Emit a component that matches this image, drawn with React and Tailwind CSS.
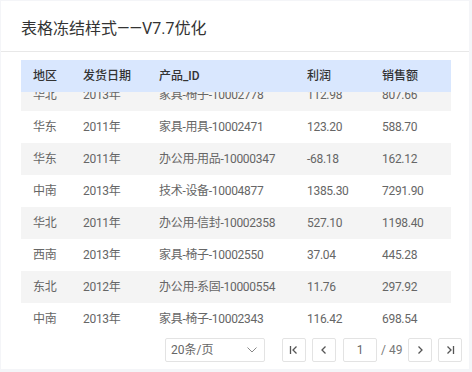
import React from "react";

const rows = [
  ["华北", "2013年", "家具-椅子-10002778", "112.98", "807.66"],
  ["华东", "2011年", "家具-用具-10002471", "123.20", "588.70"],
  ["华东", "2011年", "办公用-用品-10000347", "-68.18", "162.12"],
  ["中南", "2013年", "技术-设备-10004877", "1385.30", "7291.90"],
  ["华北", "2011年", "办公用-信封-10002358", "527.10", "1198.40"],
  ["西南", "2013年", "家具-椅子-10002550", "37.04", "445.28"],
  ["东北", "2012年", "办公用-系固-10000554", "11.76", "297.92"],
  ["中南", "2013年", "家具-椅子-10002343", "116.42", "698.54"],
];

const widths = ["w-[50px]", "w-[76px]", "w-[148px]", "w-[75px]", "w-[81px]"];
const headers = ["地区", "发货日期", "产品_ID", "利润", "销售额"];

function Btn({ children }) {
  return (
    <div className="w-[24px] h-[24px] flex items-center justify-center border border-[#e3e3e3] rounded-[2px] bg-white text-[#555]">
      {children}
    </div>
  );
}

export default function App() {
  return (
    <div className="w-[472px] h-[372px] bg-[#f4f5f8] pl-[1px] pt-[1px]" style={{ fontFamily: "Roboto, 'Noto Sans CJK SC', sans-serif" }}>
      <div className="w-[468px] h-[368px] bg-white flex flex-col">
        <div className="h-[51px] border-b border-[#e8e8e8] flex items-center pl-[20px] pt-[6px] text-[16px] text-[#333]">
          表格冻结样式——V7.7优化
        </div>
        <div className="pl-[20px] pt-[8px]">
          <div className="w-[430px]">
            <div className="flex h-[32px] bg-[#d9e7fe] items-center text-[12px] font-medium text-[#333]">
              {headers.map((h, i) => (
                <div key={i} className={`${widths[i]} pl-[12px]`}>{h}</div>
              ))}
            </div>
            <div className="h-[243px] overflow-hidden">
              <div className="-mt-[13px]">
                {rows.map((r, ri) => (
                  <div key={ri} className={`flex h-[32px] items-center text-[12px] text-[#666] tracking-[-0.3px] ${ri % 2 === 0 ? "bg-[#f4f4f4]" : "bg-white"}`}>
                    {r.map((c, i) => (
                      <div key={i} className={`${widths[i]} pl-[12px] whitespace-nowrap`}>{c}</div>
                    ))}
                  </div>
                ))}
              </div>
            </div>
          </div>
        </div>
        <div className="flex justify-end items-center pr-[7px] pt-[3px] text-[12px] text-[#666]">
          <div className="w-[100px] h-[24px] border border-[#e3e3e3] rounded-[2px] flex items-center justify-between pl-[5px] pr-[7px]">
            <span>20条/页</span>
            <svg width="10" height="6" viewBox="0 0 10 6" fill="none" stroke="#888" strokeWidth="1">
              <path d="M0.5 0.5 L5 5 L9.5 0.5" />
            </svg>
          </div>
          <div className="ml-[17px] flex items-center gap-[6px]">
            <Btn>
              <svg width="10" height="10" viewBox="0 0 10 10" fill="none" stroke="#555" strokeWidth="1.3">
                <path d="M1.5 1 V9" />
                <path d="M7.5 1.5 L4 5 L7.5 8.5" />
              </svg>
            </Btn>
            <Btn>
              <svg width="10" height="10" viewBox="0 0 10 10" fill="none" stroke="#555" strokeWidth="1.3">
                <path d="M6.5 1.5 L3 5 L6.5 8.5" />
              </svg>
            </Btn>
            <div className="ml-[1px] w-[34px] h-[24px] border border-[#e3e3e3] rounded-[2px] flex items-center justify-center text-[#666]">1</div>
            <span className="ml-[-2px] w-[21px] whitespace-nowrap text-[#777]">/ 49</span>
            <Btn>
              <svg width="10" height="10" viewBox="0 0 10 10" fill="none" stroke="#555" strokeWidth="1.3">
                <path d="M3.5 1.5 L7 5 L3.5 8.5" />
              </svg>
            </Btn>
            <Btn>
              <svg width="10" height="10" viewBox="0 0 10 10" fill="none" stroke="#555" strokeWidth="1.3">
                <path d="M2.5 1.5 L6 5 L2.5 8.5" />
                <path d="M8.5 1 V9" />
              </svg>
            </Btn>
          </div>
        </div>
      </div>
    </div>
  );
}
